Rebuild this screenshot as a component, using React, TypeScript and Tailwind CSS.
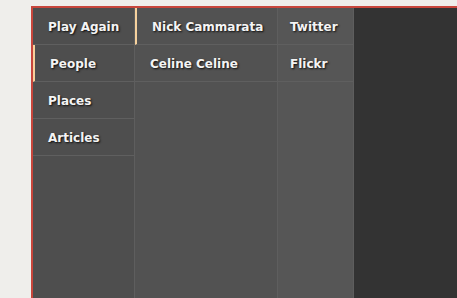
import React from "react";

interface MenuItem {
  label: string;
  active?: boolean;
}

const sections: MenuItem[] = [
  { label: "Play Again" },
  { label: "People", active: true },
  { label: "Places" },
  { label: "Articles" },
];

const people: MenuItem[] = [
  { label: "Nick Cammarata", active: true },
  { label: "Celine Celine" },
];

const links: MenuItem[] = [{ label: "Twitter" }, { label: "Flickr" }];

function MenuColumn({
  items,
  className,
  padClass,
}: {
  items: MenuItem[];
  className: string;
  padClass: string;
}) {
  return (
    <ul className={`flex h-full shrink-0 flex-col border-r border-[#5e5e5e] ${className}`}>
      {items.map((item) => (
        <li
          key={item.label}
          className={`h-[37px] border-b border-[#5f5f5f] pt-[2px] text-[12px] leading-[34px] font-bold text-[#f4f4f4] [text-shadow:1px_1px_2px_rgba(0,0,0,0.85)] ${padClass} ${
            item.active ? "border-l-2 border-l-[#f6d19d]" : ""
          }`}
        >
          {item.label}
        </li>
      ))}
    </ul>
  );
}

export default function App() {
  return (
    <div
      className="h-[298px] w-full overflow-hidden bg-[#efeeeb] pt-[6px] pl-[31px]"
      style={{ fontFamily: '"DejaVu Sans", Verdana, sans-serif' }}
    >
      <div className="flex h-[292px] border-t-2 border-l-2 border-[#c8463c]">
        {/* Sections */}
        <MenuColumn items={sections} className="w-[102px] bg-[#4e4e4e]" padClass="pl-[15px]" />

        {/* People */}
        <MenuColumn items={people} className="w-[143px] bg-[#525252]" padClass="pl-[15px]" />

        {/* Links */}
        <MenuColumn items={links} className="w-[76px] bg-[#565656]" padClass="pl-[12px]" />

        {/* Content */}
        <div className="flex-1 bg-[#333333]" />
      </div>
    </div>
  );
}
